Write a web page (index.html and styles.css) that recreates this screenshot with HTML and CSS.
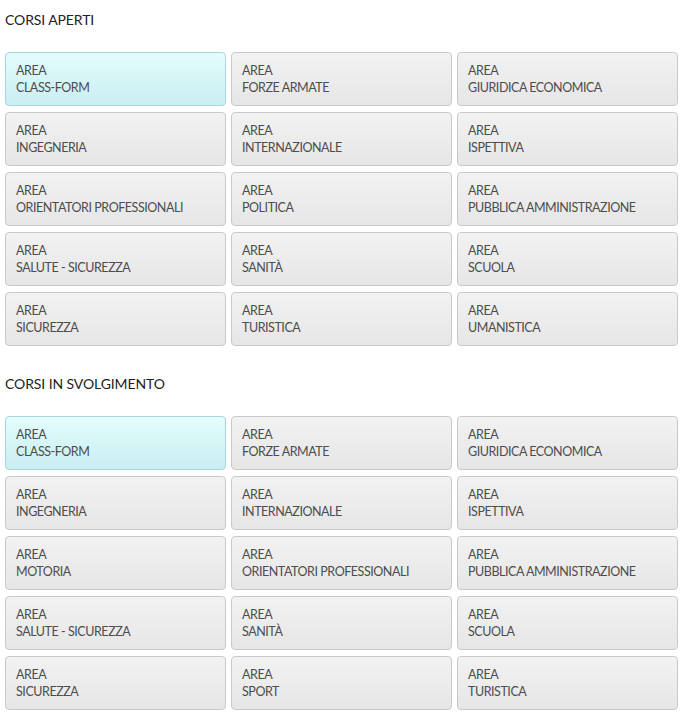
FILE: index.html
```html
<!DOCTYPE html>
<html lang="it">
<head>
    <meta charset="UTF-8">
    <title>Corsi</title>
    <link rel="stylesheet" href="styles.css">
</head>
<body>
    <h2 class="section-title">CORSI APERTI</h2>
    <div class="area-grid">
        <a class="area active" href="#">AREA<br>CLASS-FORM</a>
        <a class="area" href="#">AREA<br>FORZE ARMATE</a>
        <a class="area" href="#">AREA<br>GIURIDICA ECONOMICA</a>
        <a class="area" href="#">AREA<br>INGEGNERIA</a>
        <a class="area" href="#">AREA<br>INTERNAZIONALE</a>
        <a class="area" href="#">AREA<br>ISPETTIVA</a>
        <a class="area" href="#">AREA<br>ORIENTATORI PROFESSIONALI</a>
        <a class="area" href="#">AREA<br>POLITICA</a>
        <a class="area" href="#">AREA<br>PUBBLICA AMMINISTRAZIONE</a>
        <a class="area" href="#">AREA<br>SALUTE - SICUREZZA</a>
        <a class="area" href="#">AREA<br>SANITÀ</a>
        <a class="area" href="#">AREA<br>SCUOLA</a>
        <a class="area" href="#">AREA<br>SICUREZZA</a>
        <a class="area" href="#">AREA<br>TURISTICA</a>
        <a class="area" href="#">AREA<br>UMANISTICA</a>
    </div>

    <h2 class="section-title">CORSI IN SVOLGIMENTO</h2>
    <div class="area-grid">
        <a class="area active" href="#">AREA<br>CLASS-FORM</a>
        <a class="area" href="#">AREA<br>FORZE ARMATE</a>
        <a class="area" href="#">AREA<br>GIURIDICA ECONOMICA</a>
        <a class="area" href="#">AREA<br>INGEGNERIA</a>
        <a class="area" href="#">AREA<br>INTERNAZIONALE</a>
        <a class="area" href="#">AREA<br>ISPETTIVA</a>
        <a class="area" href="#">AREA<br>MOTORIA</a>
        <a class="area" href="#">AREA<br>ORIENTATORI PROFESSIONALI</a>
        <a class="area" href="#">AREA<br>PUBBLICA AMMINISTRAZIONE</a>
        <a class="area" href="#">AREA<br>SALUTE - SICUREZZA</a>
        <a class="area" href="#">AREA<br>SANITÀ</a>
        <a class="area" href="#">AREA<br>SCUOLA</a>
        <a class="area" href="#">AREA<br>SICUREZZA</a>
        <a class="area" href="#">AREA<br>SPORT</a>
        <a class="area" href="#">AREA<br>TURISTICA</a>
    </div>
</body>
</html>
```

FILE: styles.css
```css
body {
    margin: 0;
    padding: 0 11px 0 5px;
    background: #fff;
    font-family: Lato, "Open Sans", sans-serif;
    color: #333;
}

.section-title {
    margin: 0;
    padding: 11px 0 0 0;
    height: 41px;
    font-size: 14px;
    font-weight: normal;
    color: #222;
    letter-spacing: -0.1px;
}

.area-grid {
    display: grid;
    grid-template-columns: repeat(3, 1fr);
    column-gap: 5px;
    row-gap: 6px;
    margin-bottom: 18px;
}

.area {
    display: block;
    box-sizing: border-box;
    height: 54px;
    padding: 9px 10px 0 10px;
    border: 1px solid #c9c9c9;
    border-radius: 4px;
    background: linear-gradient(#f2f2f2, #e6e6e6);
    color: #4d4d4d;
    text-decoration: none;
    font-size: 12.5px;
    line-height: 17px;
    letter-spacing: -0.45px;
}

.area.active {
    border-color: #a9d6dc;
    background: linear-gradient(#e4fcfc, #c9eef2);
}
```
